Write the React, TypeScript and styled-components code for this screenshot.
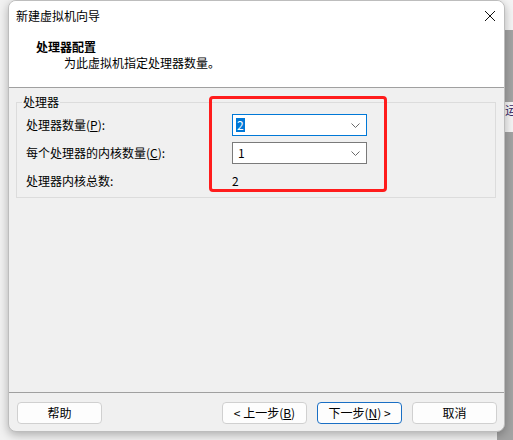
import styled, { createGlobalStyle } from "styled-components";

const GlobalStyle = createGlobalStyle`
  html, body {
    margin: 0;
    padding: 0;
  }
  body {
    font-family: "Noto Sans CJK SC", "Noto Sans", sans-serif;
    font-size: 12px;
    color: #000;
    background: #f1f1f1;
  }
`;

const Desktop = styled.div`
  display: flex;
  width: 513px;
  height: 440px;
  box-sizing: border-box;
  padding-left: 8px;
  overflow: hidden;
  background: #f1f1f1;
`;

const Window = styled.div`
  flex-shrink: 0;
  width: 497px;
  height: 432px;
  box-sizing: border-box;
  display: flex;
  flex-direction: column;
  border: 1px solid #bdbdbd;
  border-radius: 8px;
  overflow: hidden;
  background: #f0f0f0;
  box-shadow: 0 3px 10px rgba(0, 0, 0, 0.28);
  position: relative;
  z-index: 1;
`;

const TitleBar = styled.div`
  height: 29px;
  display: flex;
  align-items: center;
  justify-content: space-between;
  padding: 0 9px 0 7px;
  background: #fff;
  line-height: 16px;
`;

const Header = styled.div`
  height: 57px;
  box-sizing: border-box;
  padding: 9px 0 0 27px;
  background: #fff;
  line-height: 16px;
`;

const HeaderTitle = styled.div`
  font-weight: bold;
`;

const HeaderSub = styled.div`
  padding-left: 28px;
`;

const Divider = styled.div`
  height: 1px;
  background: #a0a0a0;
`;

const Body = styled.div`
  flex: 1;
  position: relative;
  padding: 6px 8px 0 7px;
`;

const Group = styled.fieldset`
  margin: 0;
  min-width: 0;
  padding: 4px 0 5px 9px;
  border: 1px solid #dcdcdc;
`;

const Legend = styled.legend`
  margin-left: -4px;
  padding: 0 1px;
  line-height: 16px;
`;

const Rows = styled.div`
  display: grid;
  grid-template-columns: 206px 135px;
  grid-auto-rows: 22px;
  row-gap: 6px;
  align-items: center;
  line-height: 16px;
`;

const Combo = styled.div<{ $focused?: boolean; $pad: number }>`
  height: 22px;
  box-sizing: border-box;
  display: flex;
  align-items: center;
  justify-content: space-between;
  padding: 0 6px 0 ${(p) => p.$pad}px;
  border: 1px solid ${(p) => (p.$focused ? "#0078d7" : "#7a7a7a")};
  background: #fff;
`;

const Selected = styled.span`
  padding: 0 1px;
  line-height: 14px;
  background: #0078d7;
  color: #fff;
`;

const Mnemonic = styled.span`
  text-decoration: underline;
`;

const Highlight = styled.div`
  position: absolute;
  left: 200px;
  top: 8px;
  width: 178px;
  height: 96px;
  box-sizing: border-box;
  border: 3px solid #ff1c1c;
  border-radius: 4px;
  pointer-events: none;
`;

const Footer = styled.div`
  height: 38px;
  box-sizing: border-box;
  display: flex;
  gap: 10px;
  padding: 9px 7px 0 8px;
`;

const Button = styled.button<{ $primary?: boolean; $push?: boolean }>`
  width: 85px;
  height: 22px;
  padding: 0;
  margin-left: ${(p) => (p.$push ? "auto" : "0")};
  font-family: inherit;
  font-size: 12px;
  line-height: 16px;
  color: #000;
  background: #fdfdfd;
  border: 1px solid ${(p) => (p.$primary ? "#1a6fc4" : "#d0d0d0")};
  border-radius: 4px;
`;

const RightStrip = styled.div`
  flex: 1;
  display: flex;
  flex-direction: column;
  margin-left: -8px;
`;

const StripBlock = styled.div<{ $h?: number; $light?: boolean }>`
  height: ${(p) => (p.$h ? `${p.$h}px` : "auto")};
  flex: ${(p) => (p.$h ? "none" : "1")};
  background: ${(p) => (p.$light ? "#f4f4f4" : "#a3a3a3")};
  padding-left: 8px;
  overflow: hidden;
  white-space: nowrap;
  font-size: 12px;
  line-height: 16px;
  color: #3a2a6a;
`;

const ChevronDown = () => (
  <svg width="9" height="5" viewBox="0 0 9 5">
    <path d="M0.5 0.5 L4.5 4.5 L8.5 0.5" fill="none" stroke="#6a6a6a" strokeWidth="1" />
  </svg>
);

const CloseIcon = () => (
  <svg width="10" height="10" viewBox="0 0 10 10">
    <path d="M0 0 L10 10 M10 0 L0 10" stroke="#111" strokeWidth="1" />
  </svg>
);

export default function App() {
  return (
    <>
      <GlobalStyle />
      <Desktop>
        <Window>
          <TitleBar>
            <span>新建虚拟机向导</span>
            <CloseIcon />
          </TitleBar>
          <Header>
            <HeaderTitle>处理器配置</HeaderTitle>
            <HeaderSub>为此虚拟机指定处理器数量。</HeaderSub>
          </Header>
          <Divider />
          <Body>
            <Group>
              <Legend>处理器</Legend>
              <Rows>
                <span>
                  处理器数量(<Mnemonic>P</Mnemonic>):
                </span>
                <Combo $focused $pad={3}>
                  <Selected>2</Selected>
                  <ChevronDown />
                </Combo>
                <span>
                  每个处理器的内核数量(<Mnemonic>C</Mnemonic>):
                </span>
                <Combo $pad={5}>
                  <span>1</span>
                  <ChevronDown />
                </Combo>
                <span>处理器内核总数:</span>
                <span>2</span>
              </Rows>
            </Group>
            <Highlight />
          </Body>
          <Divider />
          <Footer>
            <Button>帮助</Button>
            <Button $push>
              &lt; 上一步(<Mnemonic>B</Mnemonic>)
            </Button>
            <Button $primary>
              下一步(<Mnemonic>N</Mnemonic>) &gt;
            </Button>
            <Button>取消</Button>
          </Footer>
        </Window>
        <RightStrip>
          <StripBlock $h={30} $light />
          <StripBlock $h={72} />
          <StripBlock $h={30} $light>
            运
          </StripBlock>
          <StripBlock />
        </RightStrip>
      </Desktop>
    </>
  );
}
